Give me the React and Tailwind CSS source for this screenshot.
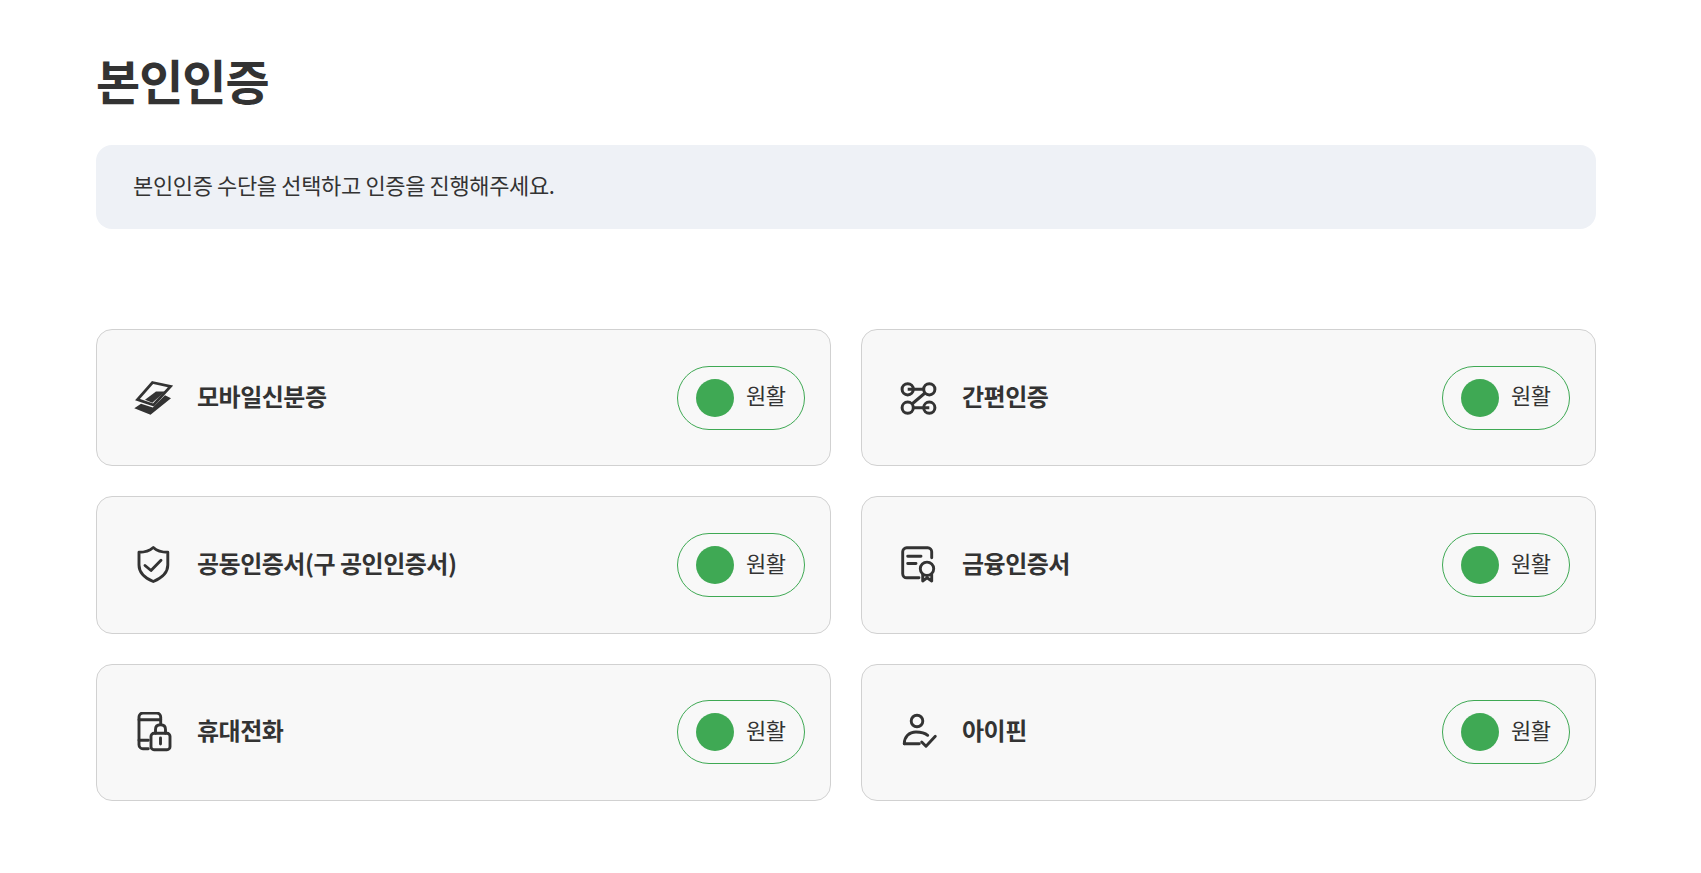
const font = { fontFamily: '"Noto Sans CJK KR", "Noto Sans", sans-serif' };

const IconMobile = () => (
  <svg width="40" height="40" viewBox="0 0 40 40" fill="none">
    <path d="M19.5 4.5L37.5 8.5L20.5 27L4.5 21.5Z" stroke="#333" strokeWidth="2.8" strokeLinejoin="miter" />
    <path d="M23 13.5L32 13.5L19.3 24.7L12 21.8Z" fill="#333" />
    <path d="M1.3 30.3L8 25.7L19.8 29.5L32 17.3L38 20.3L17.5 36.8Z" fill="#333" />
  </svg>
);

const IconShortcut = () => (
  <svg width="40" height="40" viewBox="0 0 40 40" fill="none" stroke="#333" strokeWidth="3">
    <circle cx="9.7" cy="11.3" r="5.6" />
    <circle cx="31.3" cy="11.3" r="5.6" />
    <circle cx="9.7" cy="29.7" r="5.6" />
    <circle cx="31.3" cy="29.7" r="5.6" />
    <path d="M9.7 11.3H26M15 29.7H31.3M27 15L14 26" />
  </svg>
);

const IconShield = () => (
  <svg width="40" height="40" viewBox="0 0 40 40" fill="none" stroke="#333" strokeWidth="2.9" strokeLinejoin="round" strokeLinecap="round">
    <path d="M20.3 2.5C17 5.5 12 7.3 6 7.3V20C6 28 13 33.5 20.3 36.5C27.5 33.5 34.8 28 34.8 20V7.3C28.5 7.3 23.5 5.5 20.3 2.5Z" />
    <path d="M12 20.5L18 25.5L28 15.2" />
  </svg>
);

const IconCert = () => (
  <svg width="40" height="40" viewBox="0 0 40 40" fill="none" stroke="#333" strokeWidth="2.9" strokeLinecap="round" strokeLinejoin="round">
    <path d="M21 32.8H8.7C6.5 32.8 4.7 31 4.7 28.8V6.8C4.7 4.6 6.5 2.8 8.7 2.8H29.7C31.9 2.8 33.7 4.6 33.7 6.8V12.8" />
    <path d="M9.7 11.2H23M9.7 18.5H18" />
    <circle cx="29" cy="23.8" r="6.7" />
    <path d="M24.7 29.5V36L29 32.8L33.7 36V29.5" />
  </svg>
);

const IconPhoneLock = () => (
  <svg width="40" height="40" viewBox="0 0 40 40" fill="none" stroke="#333" strokeWidth="2.9" strokeLinecap="round" strokeLinejoin="round">
    <path d="M15.3 36.7H10C7.8 36.7 6 34.9 6 32.7V5C6 2.8 7.8 1 10 1H23.7C25.9 1 27.7 2.8 27.7 5V11.7" />
    <path d="M6 7.7H27.7M6 28.3H15.3" />
    <rect x="18" y="21.3" width="19" height="16.4" rx="3" />
    <path d="M22.5 21.3V17.5C22.5 14.5 24.5 12.8 27.5 12.8C30.5 12.8 32.5 14.5 32.5 17.5V21.3" />
    <path d="M27.5 26V32" />
  </svg>
);

const IconPerson = () => (
  <svg width="40" height="40" viewBox="0 0 40 40" fill="none" stroke="#333" strokeWidth="2.9" strokeLinecap="round" strokeLinejoin="round">
    <circle cx="19" cy="9" r="5.8" />
    <path d="M6.3 31.7C6.3 25 11 20 18 20C22 20 27 21 29.7 23.3" />
    <path d="M6.3 31.7H21.3" />
    <path d="M23.7 30L28 34.3L37.3 24.3" />
  </svg>
);

const items = [
  { name: '모바일신분증', Icon: IconMobile },
  { name: '간편인증', Icon: IconShortcut },
  { name: '공동인증서(구 공인인증서)', Icon: IconShield },
  { name: '금융인증서', Icon: IconCert },
  { name: '휴대전화', Icon: IconPhoneLock },
  { name: '아이핀', Icon: IconPerson },
];

function Card({ name, Icon }) {
  return (
    <div className="h-[137.4px] rounded-[16px] border border-[#d1d1d1] bg-[#f8f8f8] pl-[36px] pr-[25px] flex items-center justify-between">
      <div className="flex items-center gap-[24px]">
        <Icon />
        <span className="text-[24px] font-bold tracking-[-0.5px] text-[#333] -mt-[4px]">{name}</span>
      </div>
      <div className="w-[128px] h-[64px] rounded-full border border-[#3fa954] pl-[18px] flex items-center gap-[12px]">
        <span className="w-[38px] h-[38px] rounded-full bg-[#3fa954]" />
        <span className="text-[22px] tracking-[-0.4px] text-[#333] -mt-[6px]">원활</span>
      </div>
    </div>
  );
}

export default function App() {
  return (
    <div className="min-h-screen bg-white pl-[96px] pr-[105px] pt-[44px]" style={font}>
      <h1 className="text-[48px] font-bold tracking-[-1px] leading-[70px] text-[#333]">본인인증</h1>
      <div className="mt-[31px] h-[84px] rounded-[16px] bg-[#eef1f6] pl-[37px] flex items-center text-[22px] tracking-[-0.36px] text-[#333]">
        <span className="-mt-[5px]">본인인증 수단을 선택하고 인증을 진행해주세요.</span>
      </div>
      <div className="mt-[100px] grid grid-cols-2 gap-[30px]">
        {items.map((it) => <Card key={it.name} {...it} />)}
      </div>
    </div>
  );
}
